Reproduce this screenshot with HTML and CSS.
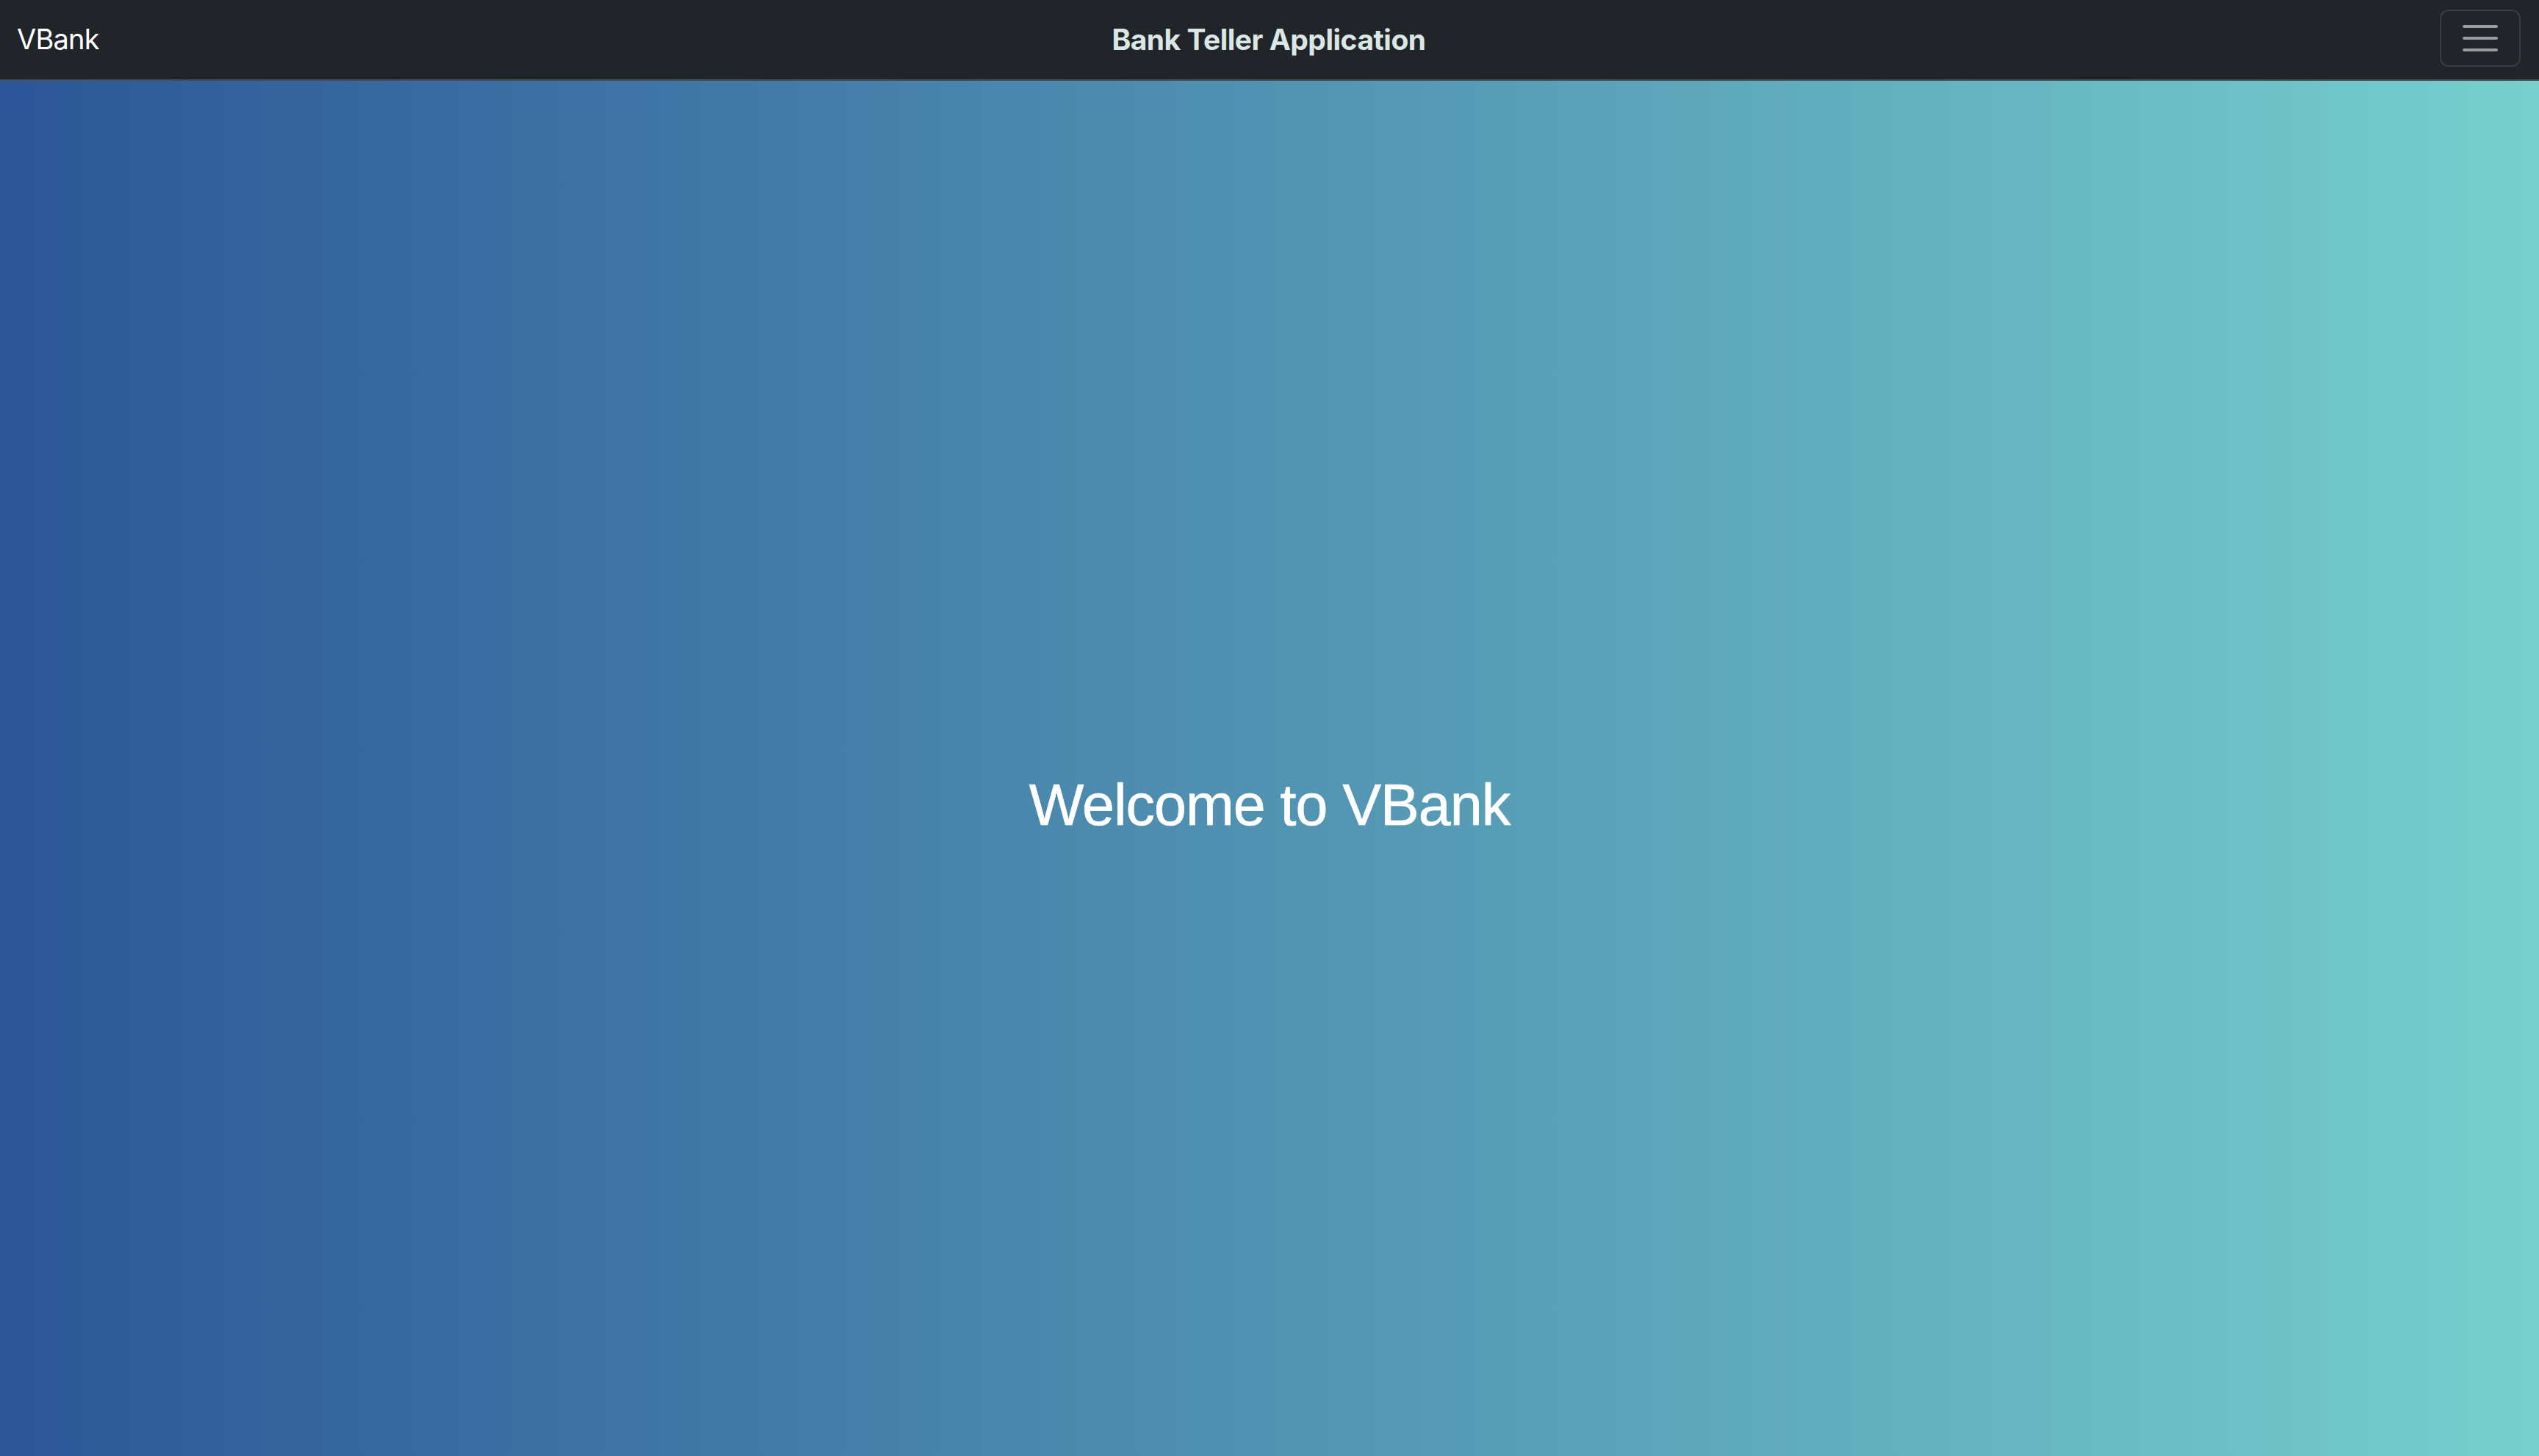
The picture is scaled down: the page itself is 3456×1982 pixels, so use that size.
FILE: index.html
```html
<!DOCTYPE html>
<html lang="en">
<head>
<meta charset="utf-8">
<title>VBank</title>
<link rel="stylesheet" href="styles.css">
</head>
<body>
<nav class="navbar">
  <a class="brand" href="#">VBank</a>
  <div class="title">Bank Teller Application</div>
  <div class="right">
    <button class="toggler" type="button" aria-label="Toggle navigation">
      <svg width="50" height="38" viewBox="0 0 50 38" aria-hidden="true">
        <path d="M3 3H47M3 19H47M3 35H47" stroke="#9c9d9f" stroke-width="4" stroke-linecap="round" fill="none"/>
      </svg>
    </button>
  </div>
</nav>
<main class="hero">
  <h1 class="welcome">Welcome to VBank</h1>
</main>
</body>
</html>
```

FILE: styles.css
```css
* { box-sizing: border-box; }
html, body { margin: 0; padding: 0; }
body {
  font-family: Inter, "Liberation Sans", sans-serif;
  background: #2c5697;
}
.navbar {
  height: 110px;
  background: #212529;
  border-bottom: 2px solid #4a4d52;
  display: grid;
  grid-template-columns: 1fr auto 1fr;
  align-items: center;
  padding: 0 25px 0 23px;
}
.brand {
  color: #ffffff;
  text-decoration: none;
  font-size: 38px;
  font-weight: 400;
  letter-spacing: -0.8px;
  justify-self: start;
  margin-top: -2px;
}
.title {
  color: #dbe7e5;
  font-size: 39px;
  font-weight: 700;
  letter-spacing: -0.5px;
  margin-top: -2px;
}
.right {
  justify-self: end;
  display: flex;
}
.toggler {
  width: 110px;
  height: 78px;
  margin-top: -4px;
  background: transparent;
  border: 2px solid #3a3d42;
  border-radius: 12px;
  display: flex;
  align-items: center;
  justify-content: center;
  padding: 0;
  cursor: pointer;
}
.hero {
  height: 100vh;
  background: linear-gradient(to right, #2c5697 0%, #76cfcd 100%);
  display: flex;
  align-items: center;
  justify-content: center;
}
.welcome {
  margin: 0 0 10px 0;
  color: #ffffff;
  font-family: "Liberation Sans", Arial, sans-serif;
  font-size: 79px;
  font-weight: 400;
  line-height: 1.2;
  letter-spacing: -1px;
  -webkit-text-stroke: 0.7px #ffffff;
}
```
